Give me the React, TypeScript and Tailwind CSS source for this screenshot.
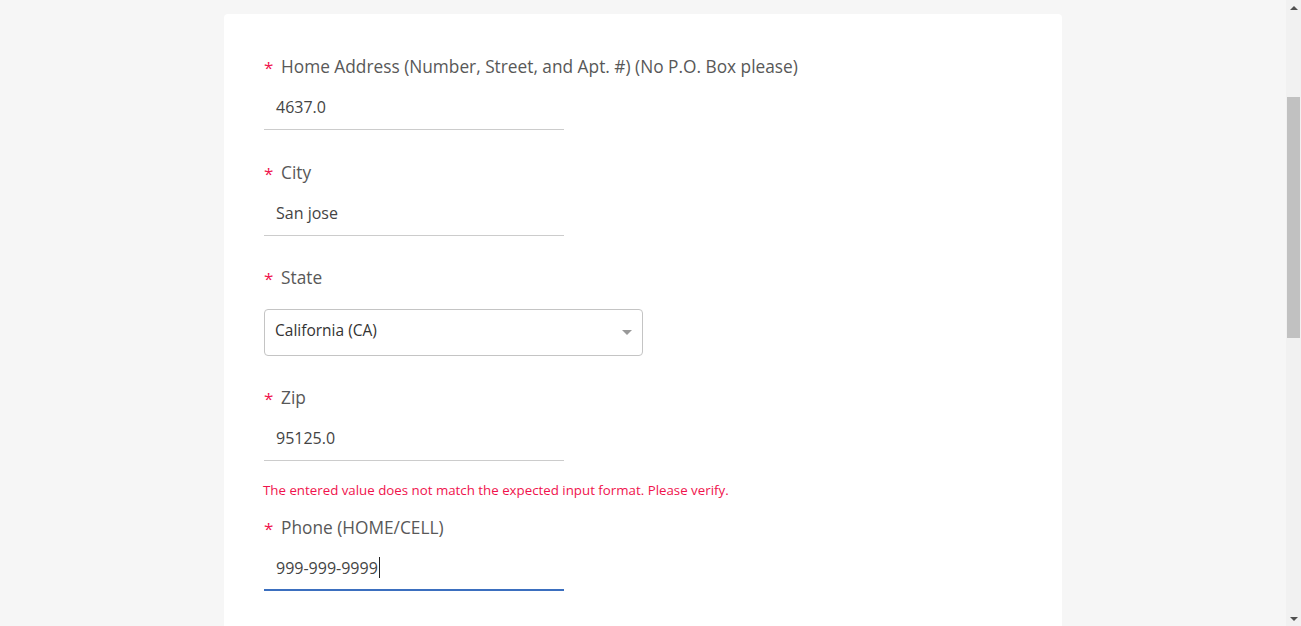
import React from "react";

const font = { fontFamily: '"Open Sans", "Lato", sans-serif' };

function Label({ text }: { text: string }) {
  return (
    <div className="flex items-center h-[24px] text-[17.3px] text-[#585858]">
      <span className="text-[#f0134d] text-[17px] w-[17px] leading-none">*</span>
      <span>{text}</span>
    </div>
  );
}

function Field({ value, focused }: { value: string; focused?: boolean }) {
  return (
    <div
      className={
        "w-[300px] h-[45px] flex items-center pl-[12px] text-[16px] text-[#444444] " +
        (focused ? "border-b-2 border-[#3b6fbf]" : "border-b border-[#cccccc]")
      }
    >
      <span>{value}</span>
      {focused && <span className="w-px h-[21px] bg-[#222] ml-[1px]" />}
    </div>
  );
}

export default function App() {
  return (
    <div className="w-[1301px] h-[626px] flex bg-[#f6f6f6] overflow-hidden" style={font}>
      <div className="flex-1 flex justify-center pt-[14px]">
        <div className="w-[838px] h-[640px] bg-white rounded-[4px] pl-[40px] pt-[41px]">
          <Label text="Home Address (Number, Street, and Apt. #) (No P.O. Box please)" />
          <div className="mt-[6px]">
            <Field value="4637.0" />
          </div>
          <div className="mt-[31px]">
            <Label text="City" />
          </div>
          <div className="mt-[6px]">
            <Field value="San jose" />
          </div>
          <div className="mt-[30px]">
            <Label text="State" />
          </div>
          <div className="mt-[19px] w-[379px] h-[47px] border border-[#c4c4c4] rounded-[4px] flex items-center justify-between pl-[10px] pr-[10px] pb-[3px] text-[15.5px] text-[#333333]">
            <span>California (CA)</span>
            <span className="mt-[2px] w-0 h-0 border-l-[5px] border-r-[5px] border-t-[5px] border-l-transparent border-r-transparent border-t-[#999999]" />
          </div>
          <div className="mt-[30px]">
            <Label text="Zip" />
          </div>
          <div className="mt-[6px]">
            <Field value="95125.0" />
          </div>
          <div className="mt-[20px] text-[13.3px] text-[#f0134d] -ml-[1px] h-[18px] leading-[18px]">
            The entered value does not match the expected input format. Please verify.
          </div>
          <div className="mt-[17px]">
            <Label text="Phone (HOME/CELL)" />
          </div>
          <div className="mt-[6px]">
            <Field value="999-999-9999" focused />
          </div>
        </div>
      </div>
      <div className="w-[15px] h-full bg-[#f1f1f1] flex flex-col items-center">
        <div className="h-[15px] flex items-center justify-center">
          <span className="w-0 h-0 border-l-[4px] border-r-[4px] border-b-[4px] border-l-transparent border-r-transparent border-b-[#505050]" />
        </div>
        <div className="mt-[82px] w-[13px] h-[241px] bg-[#c1c1c1]" />
        <div className="flex-1" />
        <div className="h-[15px] flex items-center justify-center">
          <span className="w-0 h-0 border-l-[4px] border-r-[4px] border-t-[4px] border-l-transparent border-r-transparent border-t-[#505050]" />
        </div>
      </div>
    </div>
  );
}
